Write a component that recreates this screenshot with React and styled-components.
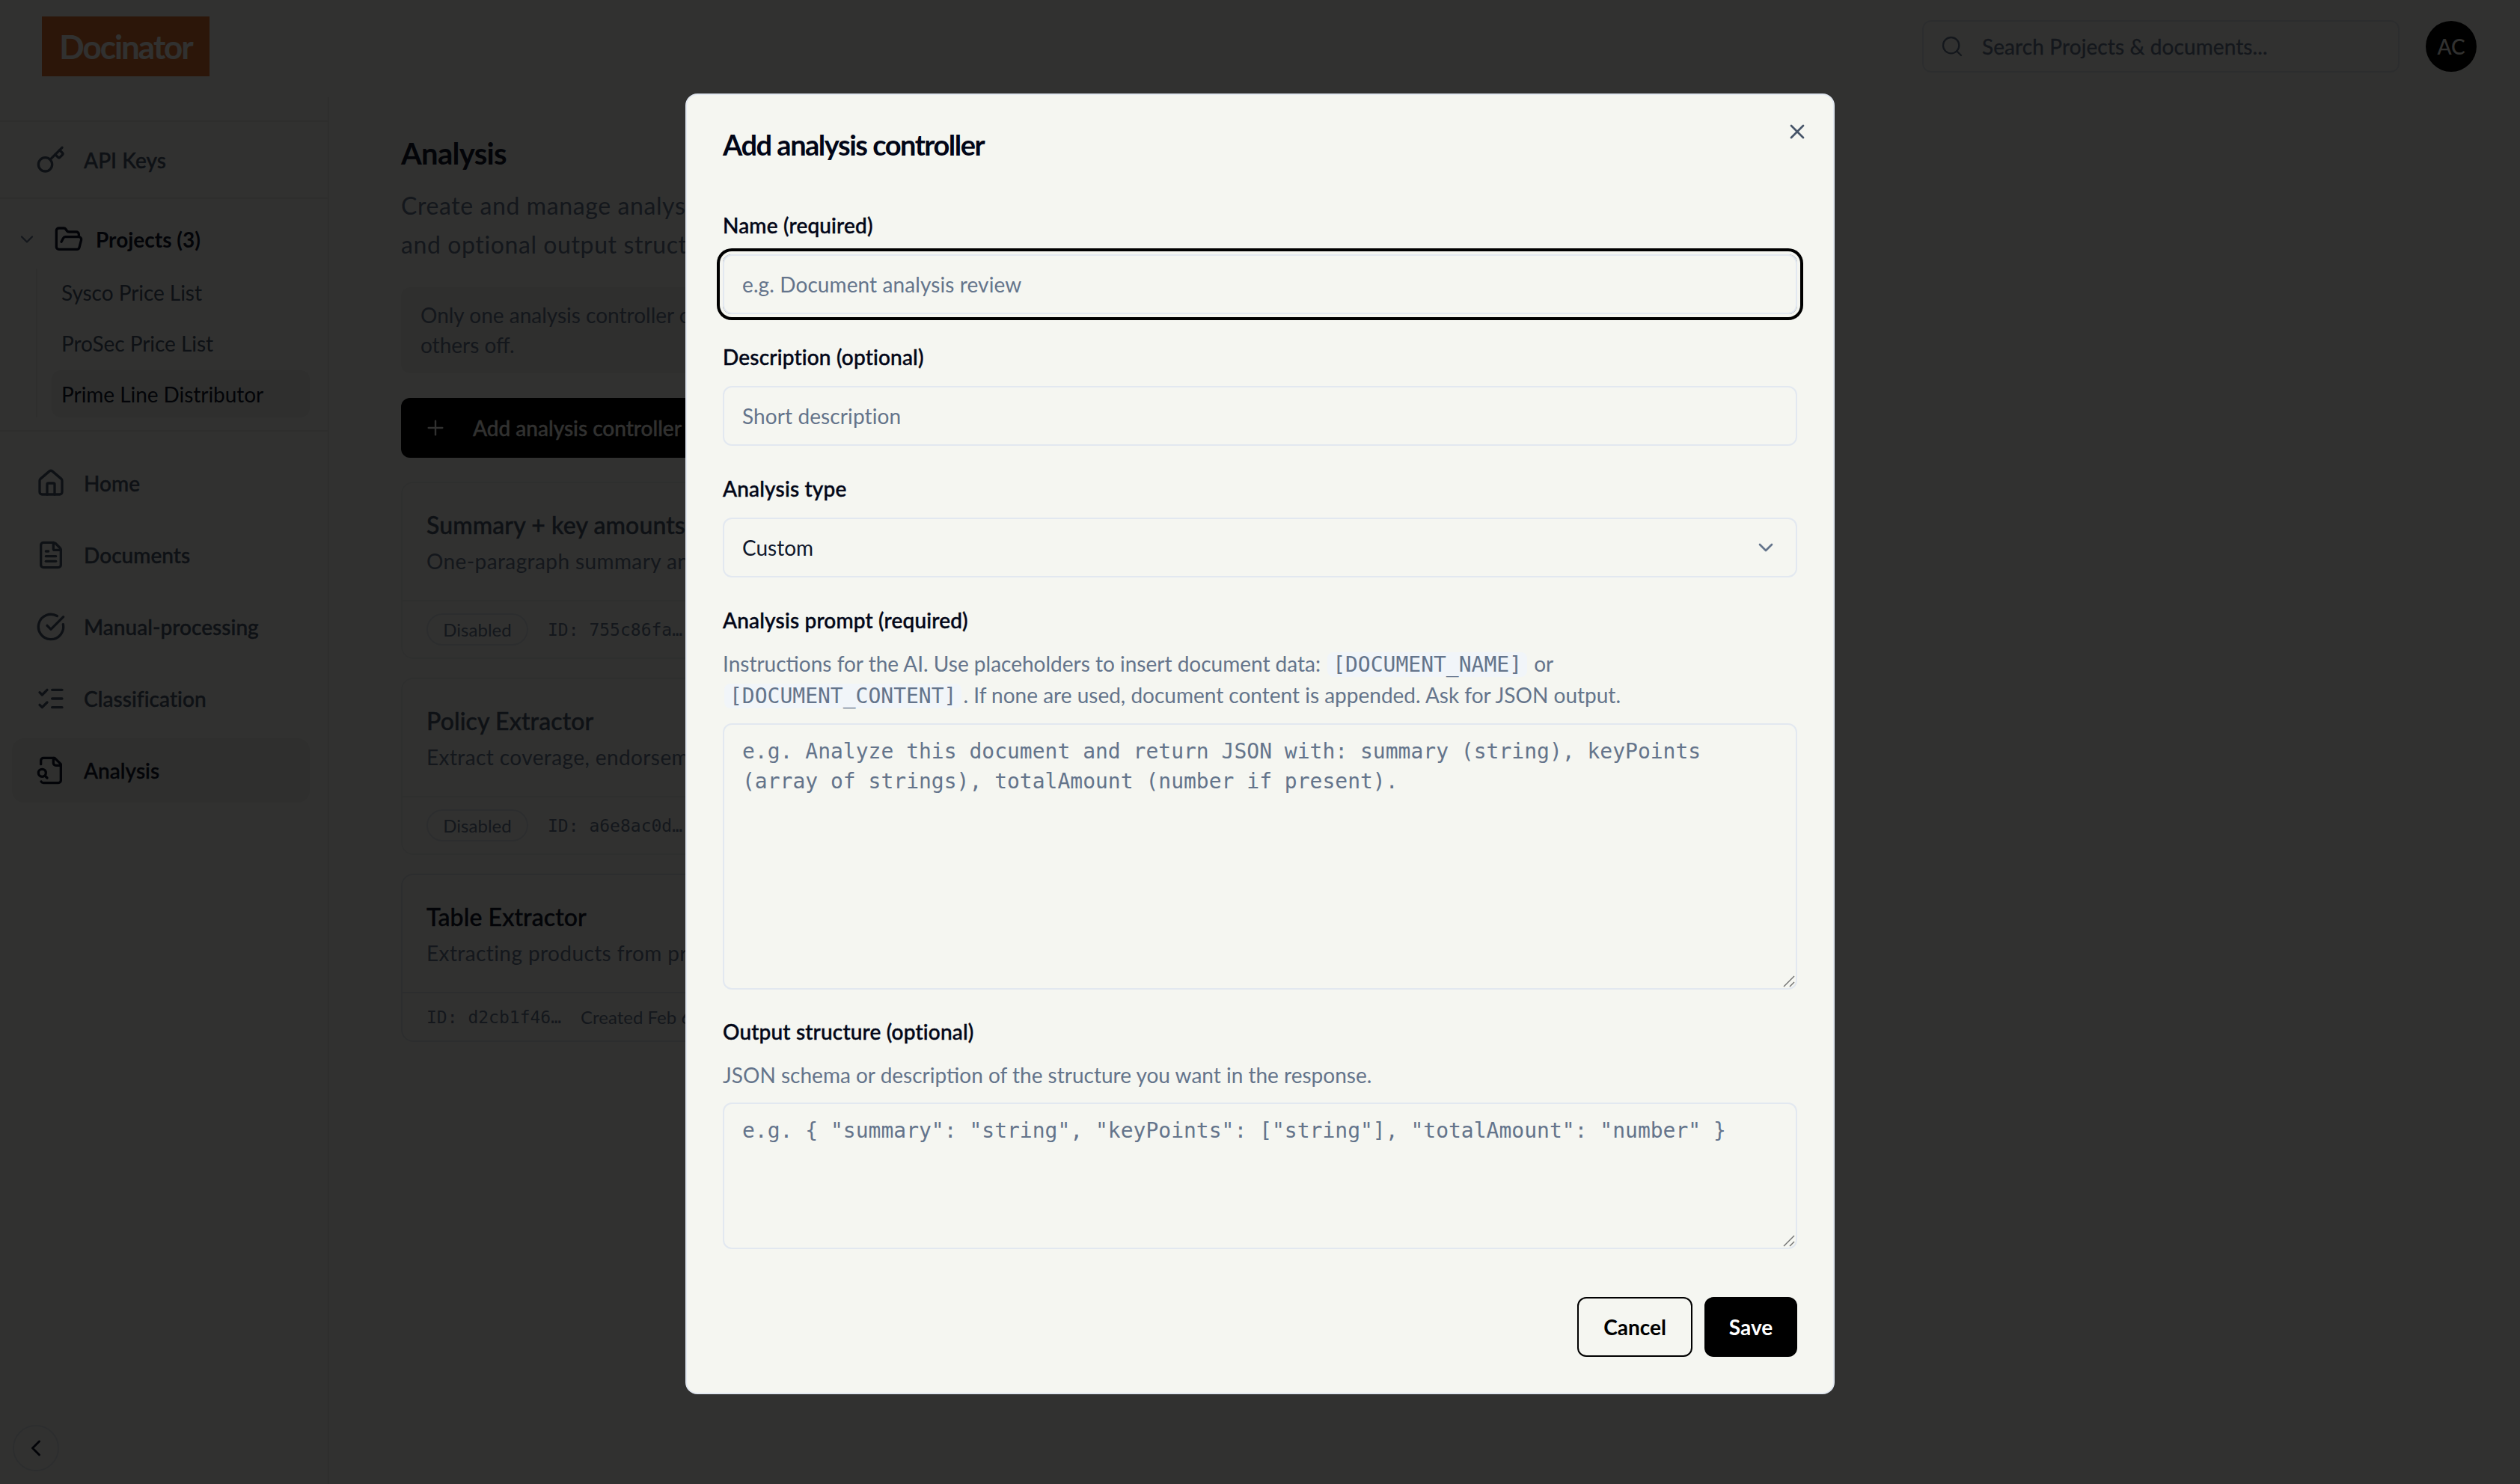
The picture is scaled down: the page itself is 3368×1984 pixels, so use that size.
import React from 'react'
import styled, { createGlobalStyle } from 'styled-components'
import {
  Key,
  ChevronDown,
  ChevronLeft,
  FolderOpen,
  House,
  FileText,
  CircleCheckBig,
  ListChecks,
  Search,
  Plus,
  X,
} from 'lucide-react'

const SANS = `Lato, "Noto Sans", sans-serif`
const MONO = `"DejaVu Sans Mono", "Liberation Mono", monospace`

const GlobalStyle = createGlobalStyle`
html, body {
  margin: 0;
  padding: 0;
  background: #f5f6f1;
  overflow: hidden;
}
* {
  box-sizing: border-box;
}
body {
  font-family: ${SANS};
  color: #0f172a;
}
`

const Page = styled.div`
position: relative;
width: 3368px;
height: 1984px;
overflow: hidden;
background: #f5f6f1;
`

const Header = styled.header`
height: 130px;
padding: 22px 58px 0 56px;
display: flex;
align-items: flex-start;
`

const Logo = styled.div`
width: 224px;
height: 80px;
background: #dc6e2d;
color: #f5f6f1;
font-size: 44px;
font-weight: 700;
letter-spacing: -2px;
display: flex;
align-items: center;
justify-content: center;
`

const SearchBox = styled.div`
margin: 5px 0 0 auto;
width: 638px;
height: 70px;
border: 2px solid #dde2e6;
border-radius: 12px;
padding-left: 22px;
display: flex;
align-items: center;
gap: 24px;
color: #64748b;
font-size: 28px;
letter-spacing: 0.1px;
-webkit-text-stroke: 0.3px currentColor;
`

const Avatar = styled.div`
margin: 6px 0 0 35px;
width: 68px;
height: 68px;
border-radius: 50%;
background: #000;
color: #f5f6f1;
font-size: 28px;
font-weight: 500;
display: flex;
align-items: center;
justify-content: center;
`

const Shell = styled.div`
display: flex;
height: 1854px;
`

const Sidebar = styled.aside`
width: 440px;
flex: none;
padding-top: 31px;
border-right: 2px solid #e4e6e0;
`

const KeySection = styled.div`
height: 105px;
padding-left: 16px;
padding-right: 22px;
border-top: 2px solid #e4e6e0;
border-bottom: 2px solid #e4e6e0;
display: flex;
align-items: center;
`

const ProjectSection = styled.div`
height: 311px;
padding-top: 34px;
border-bottom: 2px solid #e4e6e0;
`

const ProjectHead = styled.div`
height: 40px;
padding-left: 22px;
display: flex;
align-items: center;
font-size: 28px;
font-weight: 700;
color: #0f172a;
svg:first-child {
  margin-right: 22px;
  color: #64748b;
}
svg:nth-child(2) {
  margin-right: 16px;
}
`

const SubList = styled.div`
margin: 19px 0 0 48px;
padding-left: 19px;
width: 366px;
border-left: 2px solid #e4e6e0;
display: flex;
flex-direction: column;
gap: 5px;
`

const SubItem = styled.div`
height: 63px;
padding-left: 13px;
border-radius: 12px;
display: flex;
align-items: center;
font-size: 28px;
letter-spacing: -0.05px;
color: ${(p) => (p.$active ? '#0f172a' : '#475569')};
background: ${(p) => (p.$active ? '#e9ebe5' : 'transparent')};
`

const NavList = styled.nav`
padding: 26px 24px 0 16px;
display: flex;
flex-direction: column;
gap: 10px;
`

const NavItem = styled.div`
height: 86px;
width: 100%;
padding-left: 32px;
border-radius: 16px;
display: flex;
align-items: center;
gap: 24px;
font-size: 28px;
font-weight: 500;
letter-spacing: 0.05px;
-webkit-text-stroke: 0.4px currentColor;
color: ${(p) => (p.$active ? '#0f172a' : '#475569')};
background: ${(p) => (p.$active ? '#e9ebe5' : 'transparent')};
svg {
  flex: none;
  -webkit-text-stroke: 0;
}
`

const CollapseButton = styled.div`
position: absolute;
left: 17px;
top: 1905px;
width: 62px;
height: 62px;
border: 2px solid #dde2e6;
border-radius: 50%;
display: flex;
align-items: center;
justify-content: center;
color: #0f172a;
`

const Main = styled.main`
width: 1976px;
padding: 47px 0 0 96px;
`

const Heading = styled.h1`
margin: 0;
font-size: 40px;
line-height: 56px;
font-weight: 700;
letter-spacing: -0.7px;
color: #0f172a;
`

const Lead = styled.p`
margin: 16px 0 0;
font-size: 32px;
line-height: 52px;
letter-spacing: 0.6px;
color: #64748b;
`

const Notice = styled.div`
margin-top: 31px;
height: 115px;
padding: 17px 26px;
border-radius: 12px;
background: #e9ebe5;
font-size: 28px;
line-height: 40px;
color: #64748b;
`

const AddButton = styled.div`
margin-top: 33px;
width: 440px;
height: 80px;
padding-left: 30px;
border-radius: 12px;
background: #000;
color: #f5f6f1;
display: flex;
align-items: center;
gap: 34px;
font-size: 28px;
font-weight: 500;
-webkit-text-stroke: 0.3px currentColor;
svg {
  -webkit-text-stroke: 0;
}
`

const CardList = styled.div`
margin-top: 32px;
display: flex;
flex-direction: column;
gap: 25px;
`

const Card = styled.article`
border: 2px solid ${(p) => (p.$muted ? '#e7e9e7' : '#dde1e3')};
border-radius: 16px;
`

const CardBody = styled.div`
padding: 34px 32px 32px;
`

const CardTitle = styled.h2`
margin: 0;
font-size: 32px;
line-height: 44px;
font-weight: 500;
letter-spacing: 0.1px;
-webkit-text-stroke: 0.4px currentColor;
color: ${(p) => (p.$muted ? '#475569' : '#0f172a')};
`

const CardText = styled.p`
margin: 6px 0 0;
font-size: 28px;
line-height: 40px;
letter-spacing: 0.4px;
color: #64748b;
`

const CardFooter = styled.div`
padding: 0 32px;
height: ${(p) => (p.$short ? '65px' : '77px')};
border-top: 2px solid ${(p) => (p.$short ? '#dde1e3' : '#e7e9e7')};
display: flex;
align-items: center;
gap: 26px;
font-size: 24px;
color: #64748b;
`

const Pill = styled.span`
width: 136px;
height: 43px;
border: 2px solid #dbe0e5;
border-radius: 22px;
display: flex;
align-items: center;
justify-content: center;
`

const CardId = styled.code`
font-family: ${MONO};
font-size: 23px;
`

const Overlay = styled.div`
position: absolute;
inset: 0;
padding-top: 4px;
background: rgba(0, 0, 0, 0.8);
display: flex;
align-items: center;
justify-content: center;
`

const Modal = styled.form`
position: relative;
width: 1536px;
padding: 46px 48px 48px;
border: 2px solid #e2e8f0;
border-radius: 16px;
background: #f5f6f1;
`

const ModalTitle = styled.h2`
margin: 0 0 68px;
font-size: 38px;
line-height: 40px;
font-weight: 700;
letter-spacing: -1.5px;
color: #020617;
`

const CloseButton = styled.div`
position: absolute;
right: 32px;
top: 33px;
width: 32px;
height: 32px;
color: #475569;
`

const Field = styled.div`
margin-bottom: ${(p) => p.$gap ?? 37}px;
`

const Label = styled.label`
display: block;
font-size: 28px;
line-height: 40px;
font-weight: 500;
letter-spacing: 0.18px;
-webkit-text-stroke: 0.45px currentColor;
color: #020617;
margin-bottom: 19px;
`

const controlBase = `
display: block;
width: 100%;
border: 2px solid #e2e8f0;
border-radius: 12px;
background: transparent;
outline: none;
margin: 0;
`

const Input = styled.input`
${controlBase}
height: 80px;
padding: 0 24px;
font-family: ${SANS};
font-size: 28px;
letter-spacing: 0.1px;
color: #0f172a;
box-shadow: ${(p) => (p.$focused ? '0 0 0 4px #f5f6f1, 0 0 0 8px #000' : 'none')};
&::placeholder {
  color: #64748b;
  opacity: 1;
}
`

const SelectBox = styled.div`
${controlBase}
height: 80px;
padding: 0 24px;
display: flex;
align-items: center;
justify-content: space-between;
font-size: 28px;
color: #0f172a;
svg {
  color: #64748b;
}
`

const Help = styled.p`
margin: -1px 0 16px;
font-size: 28px;
line-height: 41px;
color: #64748b;
`

const Chip = styled.code`
font-family: ${MONO};
font-size: 28px;
padding: 0 7px;
margin: 0 2px;
border-radius: 8px;
background: #f1f5f9;
color: #64748b;
`

const AreaWrap = styled.div`
position: relative;
`

const TextArea = styled.textarea`
${controlBase}
height: ${(p) => p.$height}px;
padding: 16px 24px;
font-family: ${MONO};
font-size: 28px;
line-height: 40px;
color: #0f172a;
resize: none;
&::placeholder {
  color: #64748b;
  opacity: 1;
}
`

const GripIcon = styled.svg`
position: absolute;
right: 3px;
bottom: 3px;
width: 16px;
height: 16px;
stroke: #737373;
stroke-width: 1.5;
fill: none;
`

const Actions = styled.div`
margin-top: 64px;
display: flex;
justify-content: flex-end;
gap: 16px;
`

const ActionButton = styled.button`
height: 80px;
width: ${(p) => p.$width}px;
padding: 0;
border: 2px solid #000;
border-radius: 12px;
font-family: ${SANS};
font-size: 28px;
font-weight: 700;
color: ${(p) => (p.$primary ? '#fff' : '#000')};
background: ${(p) => (p.$primary ? '#000' : 'transparent')};
`

// older lucide file-search, magnifier sits outside the page at lower left
const FileLens = ({ size }) => (
  <svg
    width={size}
    height={size}
    viewBox="0 0 24 24"
    fill="none"
    stroke="currentColor"
    strokeWidth="2"
    strokeLinecap="round"
    strokeLinejoin="round"
  >
    <path d="M14 2v4a2 2 0 0 0 2 2h4" />
    <path d="M4.268 21a2 2 0 0 0 1.727 1H18a2 2 0 0 0 2-2V7l-5-5H6a2 2 0 0 0-2 2v3" />
    <path d="m9 18-1.5-1.5" />
    <circle cx="5" cy="14" r="3" />
  </svg>
)

const Grip = () => (
  <GripIcon viewBox="0 0 16 16">
    <path d="M1 15 15 1" />
    <path d="M9 15 15 9" />
  </GripIcon>
)

const NAV = [
  { label: 'Home', icon: House },
  { label: 'Documents', icon: FileText },
  { label: 'Manual-processing', icon: CircleCheckBig },
  { label: 'Classification', icon: ListChecks },
  { label: 'Analysis', icon: FileLens, active: true },
]

const CARDS = [
  {
    title: 'Summary + key amounts',
    text: 'One-paragraph summary and key amounts from each document',
    id: '755c86fa…',
    disabled: true,
  },
  {
    title: 'Policy Extractor',
    text: 'Extract coverage, endorsements and limits from policies',
    id: 'a6e8ac0d…',
    disabled: true,
  },
  {
    title: 'Table Extractor',
    text: 'Extracting products from price lists',
    id: 'd2cb1f46…',
    created: 'Created Feb 6, 2026',
  },
]

const App = () => {
  return (
    <Page>
      <GlobalStyle />
      <Header>
        <Logo>Docinator</Logo>
        <SearchBox>
          <Search size={32} strokeWidth={1.75} />
          Search Projects &amp; documents...
        </SearchBox>
        <Avatar>AC</Avatar>
      </Header>

      <Shell>
        <Sidebar>
          <KeySection>
            <NavItem>
              <Key size={40} />
              API Keys
            </NavItem>
          </KeySection>
          <ProjectSection>
            <ProjectHead>
              <ChevronDown size={28} />
              <FolderOpen size={40} />
              Projects (3)
            </ProjectHead>
            <SubList>
              <SubItem>Sysco Price List</SubItem>
              <SubItem>ProSec Price List</SubItem>
              <SubItem $active>Prime Line Distributor</SubItem>
            </SubList>
          </ProjectSection>
          <NavList>
            {NAV.map((item) => (
              <NavItem key={item.label} $active={item.active}>
                <item.icon size={40} />
                {item.label}
              </NavItem>
            ))}
          </NavList>
        </Sidebar>

        <Main>
          <Heading>Analysis</Heading>
          <Lead>
            Create and manage analysis controllers with a prompt
            <br />
            and optional output structure for your documents.
          </Lead>
          <Notice>
            Only one analysis controller can be enabled at a time. Enabling one turns the
            <br />
            others off.
          </Notice>
          <AddButton>
            <Plus size={32} strokeWidth={1.75} />
            Add analysis controller
          </AddButton>
          <CardList>
            {CARDS.map((card) => (
              <Card key={card.id} $muted={card.disabled}>
                <CardBody>
                  <CardTitle $muted={card.disabled}>{card.title}</CardTitle>
                  <CardText>{card.text}</CardText>
                </CardBody>
                <CardFooter $short={!card.disabled}>
                  {card.disabled && <Pill>Disabled</Pill>}
                  <CardId>ID: {card.id}</CardId>
                  {card.created && <span>{card.created}</span>}
                </CardFooter>
              </Card>
            ))}
          </CardList>
        </Main>
      </Shell>

      <CollapseButton>
        <ChevronLeft size={36} />
      </CollapseButton>

      <Overlay>
        <Modal>
          <CloseButton>
            <X size={32} strokeWidth={2} />
          </CloseButton>
          <ModalTitle>Add analysis controller</ModalTitle>

          <Field>
            <Label>Name (required)</Label>
            <Input $focused placeholder="e.g. Document analysis review" />
          </Field>
          <Field>
            <Label>Description (optional)</Label>
            <Input placeholder="Short description" />
          </Field>
          <Field>
            <Label>Analysis type</Label>
            <SelectBox>
              Custom
              <ChevronDown size={32} />
            </SelectBox>
          </Field>
          <Field $gap={36}>
            <Label>Analysis prompt (required)</Label>
            <Help>
              Instructions for the AI. Use placeholders to insert document data:{' '}
              <Chip>[DOCUMENT_NAME]</Chip> or
              <br />
              <Chip>[DOCUMENT_CONTENT]</Chip>. If none are used, document content is appended. Ask
              for JSON output.
            </Help>
            <AreaWrap>
              <TextArea
                $height={356}
                placeholder="e.g. Analyze this document and return JSON with: summary (string), keyPoints (array of strings), totalAmount (number if present)."
              />
              <Grip />
            </AreaWrap>
          </Field>
          <Field $gap={0}>
            <Label>Output structure (optional)</Label>
            <Help>JSON schema or description of the structure you want in the response.</Help>
            <AreaWrap>
              <TextArea
                $height={196}
                placeholder={'e.g. { "summary": "string", "keyPoints": ["string"], "totalAmount": "number" }'}
              />
              <Grip />
            </AreaWrap>
          </Field>

          <Actions>
            <ActionButton type="button" $width={154}>
              Cancel
            </ActionButton>
            <ActionButton type="button" $primary $width={124}>
              Save
            </ActionButton>
          </Actions>
        </Modal>
      </Overlay>
    </Page>
  )
}

export default App
